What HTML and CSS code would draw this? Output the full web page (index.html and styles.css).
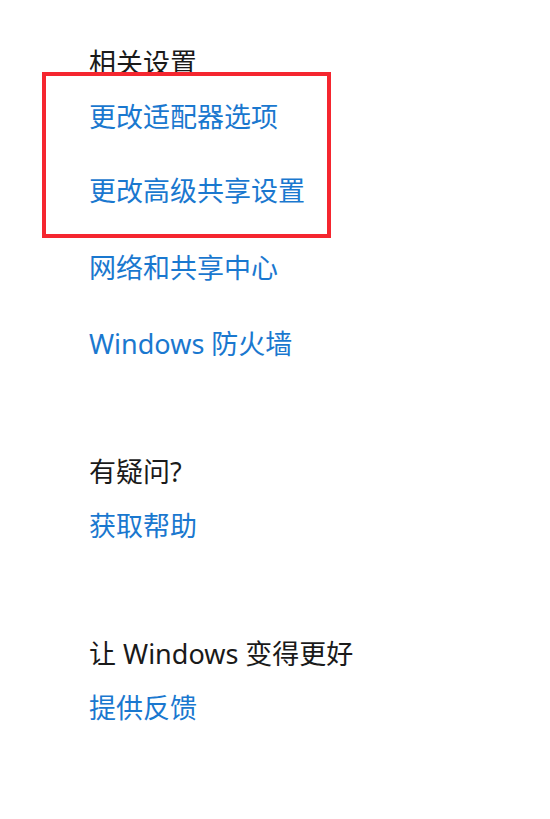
FILE: index.html
```html
<!DOCTYPE html>
<html lang="zh-CN">
<head>
  <meta charset="UTF-8">
  <title>网络和 Internet</title>
  <meta name="viewport" content="width=device-width, initial-scale=1.0">
  <link rel="stylesheet" href="styles.css">
</head>
<body>
  <div id="sidebar">
    <div class="group">
      <h3>相关设置</h3>
      <div class="highlight">
        <a href="#">更改适配器选项</a>
        <a href="#">更改高级共享设置</a>
      </div>
      <a href="#" class="after-box">网络和共享中心</a>
      <a href="#" class="spaced">Windows 防火墙</a>
    </div>

    <div class="group">
      <h3>有疑问?</h3>
      <a href="#">获取帮助</a>
    </div>

    <div class="group">
      <h3>让 Windows 变得更好</h3>
      <a href="#">提供反馈</a>
    </div>
  </div>
</body>
</html>
```

FILE: styles.css
```css
* { box-sizing: border-box; }

body {
  margin: 0;
  background: #fff;
  font-family: "Noto Sans", "Noto Sans CJK SC", sans-serif;
  font-size: 27px;
  line-height: 36px;
  color: #1a1a1a;
}

#sidebar {
  padding: 45px 0 0 89px;
  display: flex;
  flex-direction: column;
}

.group {
  display: flex;
  flex-direction: column;
  align-items: flex-start;
  margin-bottom: 92px;
}

h3 {
  margin: 0 0 18px;
  font-size: 27px;
  font-weight: normal;
  line-height: 36px;
}

a {
  color: #1a78cf;
  text-decoration: none;
}

/* red frame drawn round the first two links */
.highlight {
  display: flex;
  flex-direction: column;
  gap: 38px;
  width: 289px;
  margin: -27px 0 0 -47px;
  padding: 23px 0 25px 43px;
  border: 4px solid #f5262f;
}

.after-box {
  margin-top: 12px;
}

.spaced {
  margin-top: 40px;
}
```
